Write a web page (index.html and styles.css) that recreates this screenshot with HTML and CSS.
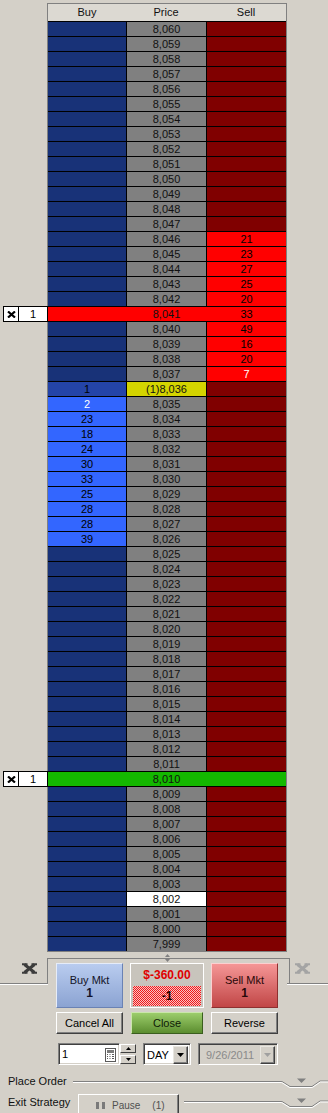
FILE: index.html
```html
<!DOCTYPE html>
<html>
<head>
<meta charset="utf-8">
<link rel="stylesheet" href="styles.css">
</head>
<body>
<div class="ladder">
  <div class="head"><div>Buy</div><div>Price</div><div>Sell</div></div>
  <div class="r"><div class="b"></div><div class="p">8,060</div><div class="s"></div></div>
  <div class="r"><div class="b"></div><div class="p">8,059</div><div class="s"></div></div>
  <div class="r"><div class="b"></div><div class="p">8,058</div><div class="s"></div></div>
  <div class="r"><div class="b"></div><div class="p">8,057</div><div class="s"></div></div>
  <div class="r"><div class="b"></div><div class="p">8,056</div><div class="s"></div></div>
  <div class="r"><div class="b"></div><div class="p">8,055</div><div class="s"></div></div>
  <div class="r"><div class="b"></div><div class="p">8,054</div><div class="s"></div></div>
  <div class="r"><div class="b"></div><div class="p">8,053</div><div class="s"></div></div>
  <div class="r"><div class="b"></div><div class="p">8,052</div><div class="s"></div></div>
  <div class="r"><div class="b"></div><div class="p">8,051</div><div class="s"></div></div>
  <div class="r"><div class="b"></div><div class="p">8,050</div><div class="s"></div></div>
  <div class="r"><div class="b"></div><div class="p">8,049</div><div class="s"></div></div>
  <div class="r"><div class="b"></div><div class="p">8,048</div><div class="s"></div></div>
  <div class="r"><div class="b"></div><div class="p">8,047</div><div class="s"></div></div>
  <div class="r"><div class="b"></div><div class="p">8,046</div><div class="s ask">21</div></div>
  <div class="r"><div class="b"></div><div class="p">8,045</div><div class="s ask">23</div></div>
  <div class="r"><div class="b"></div><div class="p">8,044</div><div class="s ask">27</div></div>
  <div class="r"><div class="b"></div><div class="p">8,043</div><div class="s ask">25</div></div>
  <div class="r"><div class="b"></div><div class="p">8,042</div><div class="s ask">20</div></div>
  <div class="r fill-red">
    <div class="mk"><div class="mk-x"><svg width="9" height="7" viewBox="0 0 9 7"><path d="M1 0.5L8 6.5M8 0.5L1 6.5" stroke="#000" stroke-width="2.2"/></svg></div><div class="mk-q">1</div></div>
    <div class="b"></div><div class="p">8,041</div><div class="s">33</div>
  </div>
  <div class="r"><div class="b"></div><div class="p">8,040</div><div class="s ask">49</div></div>
  <div class="r"><div class="b"></div><div class="p">8,039</div><div class="s ask">16</div></div>
  <div class="r"><div class="b"></div><div class="p">8,038</div><div class="s ask">20</div></div>
  <div class="r"><div class="b"></div><div class="p">8,037</div><div class="s ask w">7</div></div>
  <div class="r"><div class="b own">1</div><div class="p last">(1)8,036</div><div class="s"></div></div>
  <div class="r"><div class="b bid w">2</div><div class="p">8,035</div><div class="s"></div></div>
  <div class="r"><div class="b bid">23</div><div class="p">8,034</div><div class="s"></div></div>
  <div class="r"><div class="b bid">18</div><div class="p">8,033</div><div class="s"></div></div>
  <div class="r"><div class="b bid">24</div><div class="p">8,032</div><div class="s"></div></div>
  <div class="r"><div class="b bid">30</div><div class="p">8,031</div><div class="s"></div></div>
  <div class="r"><div class="b bid">33</div><div class="p">8,030</div><div class="s"></div></div>
  <div class="r"><div class="b bid">25</div><div class="p">8,029</div><div class="s"></div></div>
  <div class="r"><div class="b bid">28</div><div class="p">8,028</div><div class="s"></div></div>
  <div class="r"><div class="b bid">28</div><div class="p">8,027</div><div class="s"></div></div>
  <div class="r"><div class="b bid">39</div><div class="p">8,026</div><div class="s"></div></div>
  <div class="r"><div class="b"></div><div class="p">8,025</div><div class="s"></div></div>
  <div class="r"><div class="b"></div><div class="p">8,024</div><div class="s"></div></div>
  <div class="r"><div class="b"></div><div class="p">8,023</div><div class="s"></div></div>
  <div class="r"><div class="b"></div><div class="p">8,022</div><div class="s"></div></div>
  <div class="r"><div class="b"></div><div class="p">8,021</div><div class="s"></div></div>
  <div class="r"><div class="b"></div><div class="p">8,020</div><div class="s"></div></div>
  <div class="r"><div class="b"></div><div class="p">8,019</div><div class="s"></div></div>
  <div class="r"><div class="b"></div><div class="p">8,018</div><div class="s"></div></div>
  <div class="r"><div class="b"></div><div class="p">8,017</div><div class="s"></div></div>
  <div class="r"><div class="b"></div><div class="p">8,016</div><div class="s"></div></div>
  <div class="r"><div class="b"></div><div class="p">8,015</div><div class="s"></div></div>
  <div class="r"><div class="b"></div><div class="p">8,014</div><div class="s"></div></div>
  <div class="r"><div class="b"></div><div class="p">8,013</div><div class="s"></div></div>
  <div class="r"><div class="b"></div><div class="p">8,012</div><div class="s"></div></div>
  <div class="r"><div class="b"></div><div class="p">8,011</div><div class="s"></div></div>
  <div class="r fill-green">
    <div class="mk"><div class="mk-x"><svg width="9" height="7" viewBox="0 0 9 7"><path d="M1 0.5L8 6.5M8 0.5L1 6.5" stroke="#000" stroke-width="2.2"/></svg></div><div class="mk-q">1</div></div>
    <div class="b"></div><div class="p">8,010</div><div class="s"></div>
  </div>
  <div class="r"><div class="b"></div><div class="p">8,009</div><div class="s"></div></div>
  <div class="r"><div class="b"></div><div class="p">8,008</div><div class="s"></div></div>
  <div class="r"><div class="b"></div><div class="p">8,007</div><div class="s"></div></div>
  <div class="r"><div class="b"></div><div class="p">8,006</div><div class="s"></div></div>
  <div class="r"><div class="b"></div><div class="p">8,005</div><div class="s"></div></div>
  <div class="r"><div class="b"></div><div class="p">8,004</div><div class="s"></div></div>
  <div class="r"><div class="b"></div><div class="p">8,003</div><div class="s"></div></div>
  <div class="r"><div class="b"></div><div class="p cur">8,002</div><div class="s"></div></div>
  <div class="r"><div class="b"></div><div class="p">8,001</div><div class="s"></div></div>
  <div class="r"><div class="b"></div><div class="p">8,000</div><div class="s"></div></div>
  <div class="r"><div class="b"></div><div class="p">7,999</div><div class="s"></div></div>
</div>

<div class="splitter"><svg width="5" height="3" viewBox="0 0 5 3"><path d="M0 3L2.5 0L5 3Z" fill="#808080"/></svg></div>

<div class="panel">
  <div class="grip"><svg width="5" height="3" viewBox="0 0 5 3"><path d="M0 0L5 0L2.5 3Z" fill="#808080"/></svg></div>
  <div class="top-row">
    <div class="side-l">
      <svg width="15" height="11" viewBox="0 0 15 11"><path d="M2.5 1.5L12.5 9.5M12.5 1.5L2.5 9.5" stroke="#3c3c3c" stroke-width="3"/><path d="M0 1.2h5.5M9.5 1.2h5.5M0 9.8h5.5M9.5 9.8h5.5" stroke="#3c3c3c" stroke-width="2"/></svg>
    </div>
    <div class="big-grid">
      <button class="big buy"><span>Buy Mkt</span><b>1</b></button>
      <div class="pnl"><div class="pnl-val">$-360.00</div><div class="pos">-1</div></div>
      <button class="big sell"><span>Sell Mkt</span><b>1</b></button>
    </div>
    <div class="side-r">
      <svg width="15" height="11" viewBox="0 0 15 11"><path d="M2.5 1.5L12.5 9.5M12.5 1.5L2.5 9.5" stroke="#a4a4a4" stroke-width="3"/><path d="M0 1.2h5.5M9.5 1.2h5.5M0 9.8h5.5M9.5 9.8h5.5" stroke="#a4a4a4" stroke-width="2"/></svg>
    </div>
  </div>
  <div class="grid2">
    <button class="btn">Cancel All</button>
    <button class="btn close">Close</button>
    <button class="btn">Reverse</button>
  </div>
  <div class="order-row">
    <div class="qty">
      <div class="qty-field sunken">
        <span>1</span>
        <svg class="calc" width="11" height="14" viewBox="0 0 11 14"><rect x="0.5" y="0.5" width="10" height="13" fill="#fff" stroke="#5a5a5a"/><rect x="2" y="2" width="7" height="3" fill="#7a7a7a"/><path d="M2 6.5h1M4.5 6.5h1M7 6.5h2M2 8.5h1M4.5 8.5h1M7 8.5h2M2 10.5h1M4.5 10.5h1M7 10.5h2" stroke="#5a5a5a"/></svg>
      </div>
      <div class="spin">
        <div class="spin-btn"><svg width="5" height="3" viewBox="0 0 5 3"><path d="M0 3L2.5 0L5 3Z" fill="#000"/></svg></div>
        <div class="spin-btn"><svg width="5" height="3" viewBox="0 0 5 3"><path d="M0 0L5 0L2.5 3Z" fill="#000"/></svg></div>
      </div>
    </div>
    <div class="combo tif sunken">
      <div class="combo-txt">DAY</div>
      <div class="dd"><svg width="7" height="4" viewBox="0 0 7 4"><path d="M0 0L7 0L3.5 4Z" fill="#000"/></svg></div>
    </div>
    <div class="combo date sunken">
      <div class="combo-txt">9/26/2011</div>
      <div class="dd"><svg width="7" height="4" viewBox="0 0 7 4"><path d="M0 0L7 0L3.5 4Z" fill="#a0a0a0"/></svg></div>
    </div>
  </div>
</div>

<div class="sect place">
  <span class="lbl">Place Order</span>
  <div class="rule"></div>
  <svg class="notch" width="47" height="10" viewBox="0 0 47 10"><path d="M0 3.5H1L9 8.5H31L39 3H47" fill="none" stroke="#808080"/><path d="M0 4.5H0.7L8.7 9.5H31.3L39.3 4H47" fill="none" stroke="#fff"/><path d="M16 0.5H25L20.5 5Z" fill="#808080"/></svg>
</div>
<div class="sect exit">
  <span class="lbl">Exit Strategy</span>
  <button class="pause"><span class="bars"><i></i><i></i></span><span class="pz">Pause</span><span class="pz">(1)</span></button>
  <div class="rule"></div>
  <svg class="notch" width="47" height="10" viewBox="0 0 47 10"><path d="M0 3.5H1L9 8.5H31L39 3H47" fill="none" stroke="#808080"/><path d="M0 4.5H0.7L8.7 9.5H31.3L39.3 4H47" fill="none" stroke="#fff"/><path d="M16 0.5H25L20.5 5Z" fill="#808080"/></svg>
</div>
</body>
</html>
```

FILE: styles.css
```css
* { box-sizing: border-box; }
html, body { margin: 0; padding: 0; }
body {
  width: 328px;
  height: 1113px;
  overflow: hidden;
  background: #d4d0c8;
  font-family: "Liberation Sans", Arial, sans-serif;
  font-size: 11px;
  color: #000;
}
button {
  font: inherit;
  color: inherit;
  margin: 0;
  padding: 0;
  cursor: default;
}
svg { display: block; }

/* ---------- ladder ---------- */
.ladder {
  margin: 3px 0 0 47px;
  width: 240px;
  border: 1px solid #808080;
}
.head {
  display: grid;
  grid-template-columns: 78px 80px 80px;
  height: 17px;
  line-height: 17px;
  background: #dcd9d2;
  text-align: center;
  color: #101010;
}
.r {
  position: relative;
  display: grid;
  grid-template-columns: 78px 80px 80px;
  height: 15px;
  border-top: 1px solid #000;
  line-height: 14px;
  text-align: center;
}
.b { background: #183278; }
.p { background: #808080; border-left: 1px solid #000; color: #111; }
.s { background: #800000; border-left: 1px solid #000; }
.b.bid { background: #3366ff; }
.b.own { background: #2444a8; }
.s.ask { background: #ff0000; }
.p.last { background: #d4d400; }
.p.cur { background: #fff; }
.r.fill-red { background: #ff0000; }
.r.fill-green { background: #14b800; }
.r.fill-red > .b, .r.fill-red > .p, .r.fill-red > .s,
.r.fill-green > .b, .r.fill-green > .p, .r.fill-green > .s {
  background: transparent;
  border-left-color: transparent;
}
.w { color: #fff; }

.mk {
  position: absolute;
  right: 100%;
  top: -1px;
  width: 45px;
  height: 16px;
  display: flex;
  background: #fff;
  border: 1px solid #000;
  color: #000;
}
.mk-x {
  width: 15px;
  border-right: 1px solid #000;
  display: flex;
  align-items: center;
  justify-content: center;
}
.mk-q { flex: 1; text-align: center; line-height: 14px; }

/* ---------- splitter & panel ---------- */
.splitter {
  margin-left: 47px;
  width: 240px;
  height: 6px;
  display: flex;
  justify-content: center;
  padding-top: 2px;
}
.panel { position: relative; }
.panel::before {
  content: "";
  position: absolute;
  left: 47px;
  top: 0;
  width: 241px;
  height: 26px;
  border: 1px solid #808080;
  border-bottom: 0;
}
.panel::after {
  content: "";
  position: absolute;
  left: 0;
  right: 0;
  top: 25px;
  height: 2px;
  background:
    linear-gradient(to right, #808080 0 48px, transparent 48px 287px, #808080 287px) top / 100% 1px no-repeat,
    linear-gradient(to right, #ffffff 0 48px, transparent 48px 287px, #ffffff 287px) bottom / 100% 1px no-repeat;
}
.grip {
  margin-left: 47px;
  width: 240px;
  height: 5px;
  display: flex;
  justify-content: center;
  padding-top: 1px;
}
.top-row {
  position: relative;
  z-index: 1;
  display: flex;
  height: 45px;
}
.side-l { width: 56px; padding-left: 22px; }
.side-r { flex: 1; padding-left: 17px; }
.big-grid {
  display: grid;
  grid-template-columns: 67px 74px 67px;
  column-gap: 7px;
}
.big {
  height: 45px;
  display: flex;
  flex-direction: column;
  align-items: center;
  justify-content: center;
  padding-top: 3px;
  line-height: 13px;
  color: #141428;
  border: 1px solid;
}
.big b { font-size: 12px; }
.buy {
  background: linear-gradient(#b9ccef, #8ba3d2);
  border-color: #e6ecf8 #6a82b4 #6a82b4 #e6ecf8;
}
.sell {
  background: linear-gradient(#f59696, #c14646);
  border-color: #fbd0d0 #8e3030 #8e3030 #fbd0d0;
  color: #280808;
}
.pnl {
  height: 45px;
  background: #c8c4bc;
  border: 1px solid #fff;
  padding: 0 2px;
}
.pnl-val {
  height: 22px;
  line-height: 22px;
  text-align: center;
  color: #e00000;
  font-weight: bold;
  font-size: 12px;
}
.pos {
  height: 20px;
  line-height: 20px;
  text-align: center;
  font-weight: bold;
  font-size: 12px;
  color: #200000;
  background: repeating-conic-gradient(#f01818 0 25%, #f8c4c4 0 50%) 0 0 / 2px 2px;
}

.grid2 {
  position: relative;
  z-index: 1;
  display: grid;
  grid-template-columns: 67px 74px 67px;
  column-gap: 7px;
  margin: 4px 0 0 56px;
  width: 222px;
  height: 22px;
}
.btn {
  height: 22px;
  background: #d4d0c8;
  border: 1px solid;
  border-color: #fff #404040 #404040 #fff;
  box-shadow: inset -1px -1px 0 #808080;
}
.btn.close {
  margin: 0 1px;
  background: linear-gradient(#9ccd6b, #5b8d2f);
  border-color: #cbe6ac #3a5e1e #3a5e1e #cbe6ac;
  box-shadow: none;
  color: #0e1a06;
}

.order-row {
  display: flex;
  margin: 9px 0 0 58px;
  height: 22px;
}
.sunken {
  border: 1px solid;
  border-color: #808080 #fff #fff #808080;
  box-shadow: inset 1px 1px 0 #404040, inset -1px -1px 0 #d4d0c8;
}
.qty { display: flex; width: 78px; }
.qty-field {
  width: 62px;
  height: 22px;
  background: #fff;
  display: flex;
  align-items: center;
  justify-content: space-between;
  padding: 0 3px 0 3px;
}
.calc { margin-top: 1px; }
.spin {
  width: 16px;
  display: flex;
  flex-direction: column;
  justify-content: space-between;
  padding: 1px 0;
}
.spin-btn {
  height: 9px;
  background: #d4d0c8;
  border: 1px solid;
  border-color: #fff #404040 #404040 #fff;
  display: flex;
  align-items: center;
  justify-content: center;
}
.combo {
  display: flex;
  height: 22px;
  padding: 2px;
}
.combo-txt { flex: 1; line-height: 18px; padding-left: 1px; }
.tif { margin-left: 7px; width: 48px; background: #fff; }
.date { margin-left: 7px; width: 80px; background: #d4d0c8; color: #8a8a8a; }
.date .combo-txt { padding-left: 5px; }
.dd {
  width: 15px;
  height: 18px;
  background: #d4d0c8;
  border: 1px solid;
  border-color: #e8e6e0 #404040 #404040 #e8e6e0;
  box-shadow: inset -1px -1px 0 #808080;
  display: flex;
  align-items: center;
  justify-content: center;
}

/* ---------- sections ---------- */
.sect {
  display: flex;
  align-items: flex-start;
  padding-left: 8px;
}
.sect.place { margin-top: 9px; height: 14px; }
.sect.exit { margin-top: 6px; height: 22px; }
.lbl { line-height: 14px; color: #101010; }
.exit .lbl { width: 70px; line-height: 16px; }
.rule {
  flex: 1;
  height: 0;
  margin-top: 7px;
  border-top: 1px solid #808080;
  border-bottom: 1px solid #fff;
}
.place .rule { margin-left: 6px; }
.exit .rule { margin-left: 5px; }
.notch { margin-top: 4px; flex: none; }
.pause {
  width: 101px;
  height: 22px;
  display: flex;
  align-items: center;
  padding-left: 17px;
  background: #d4d0c8;
  border: 1px solid;
  border-color: #fff #404040 #404040 #fff;
  box-shadow: inset -1px -1px 0 #808080;
  color: #505050;
  font-size: 10px;
  align-self: flex-start;
}
.bars { display: flex; gap: 3px; margin-right: 7px; }
.bars i { display: block; width: 3px; height: 7px; background: #7a7a7a; }
.pz + .pz { margin-left: 12px; }
```
